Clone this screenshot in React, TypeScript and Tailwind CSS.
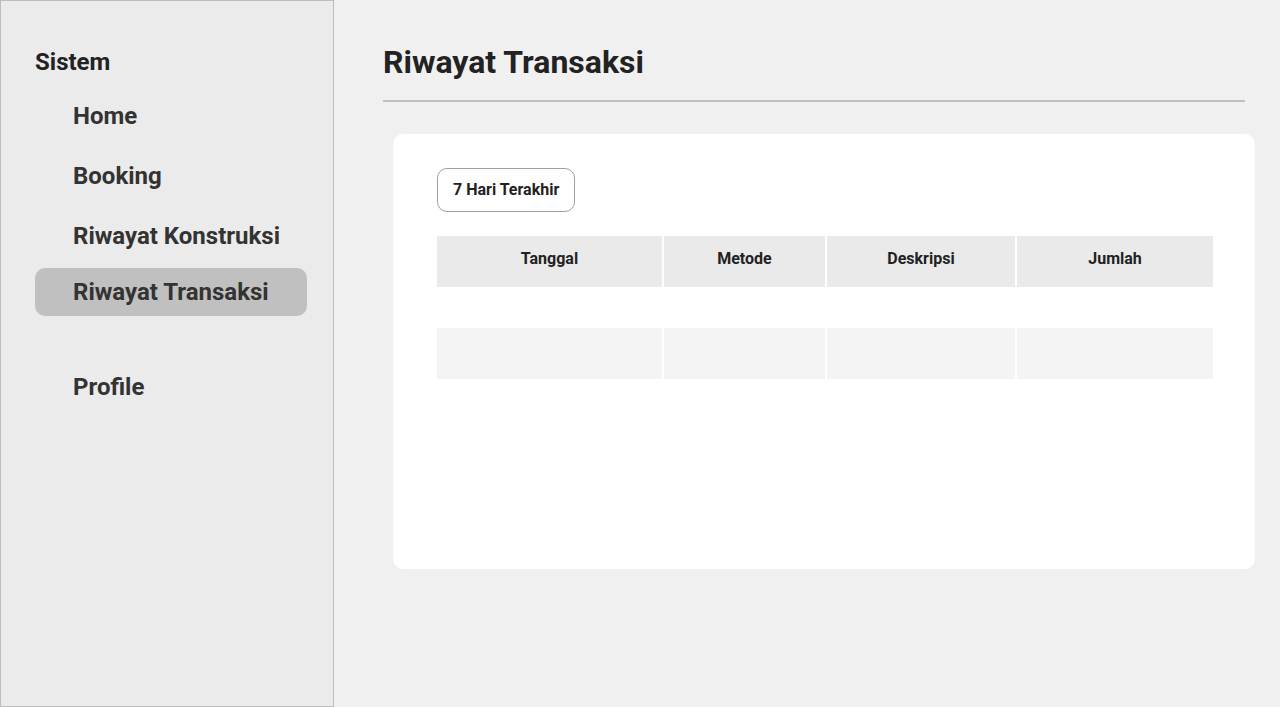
import React from 'react';

const navItems = [
  { label: 'Home', mt: 'mt-[16px]', active: false },
  { label: 'Booking', mt: 'mt-[12px]', active: false },
  { label: 'Riwayat Konstruksi', mt: 'mt-[12px]', active: false },
  { label: 'Riwayat Transaksi', mt: 'mt-[8px]', active: true },
  { label: 'Profile', mt: 'mt-[47px]', active: false },
];

const columns = ['Tanggal', 'Metode', 'Deskripsi', 'Jumlah'];

export default function App() {
  return (
    <div
      className="flex h-[707px] w-[1280px] overflow-hidden bg-[#f0f0f0]"
      style={{ fontFamily: 'Roboto, "Liberation Sans", sans-serif' }}
    >
      {/* Sidebar */}
      <aside className="w-[334px] shrink-0 border border-[#bdbdbd] bg-[#ebebeb] pl-[34px] pr-[26px] pt-[47px]">
        <div className="h-[28px] text-[24px] font-bold leading-[28px] text-[#222]">Sistem</div>
        <nav className="flex flex-col">
          {navItems.map((item) => (
            <div
              key={item.label}
              className={`${item.mt} flex h-[48px] items-center rounded-[10px] pl-[38px] text-[24px] font-bold text-[#333] ${
                item.active ? 'bg-[#c0c0c0]' : ''
              }`}
            >
              {item.label}
            </div>
          ))}
        </nav>
      </aside>

      {/* Main */}
      <main className="flex-1 pl-[49px] pr-[35px] pt-[42px]">
        <h1 className="h-[40px] text-[32px] font-bold leading-[40px] text-[#222]">Riwayat Transaksi</h1>
        <div className="mt-[18px] h-[2px] bg-[#c0c0c0]" />

        <div className="-mr-[10px] ml-[10px] mt-[32px] h-[435px] rounded-[10px] bg-white pl-[44px] pt-[34px]">
          <button className="h-[44px] rounded-[10px] border border-[#a0a0a0] bg-white px-[15px] text-[16px] font-bold text-[#222]">
            7 Hari Terakhir
          </button>

          <div className="mt-[24px] grid grid-cols-[225px_161px_188px_196px] gap-x-[2px]">
            {columns.map((c) => (
              <div key={c} className="h-[51px] bg-[#eaeaea] pt-[14px] text-center text-[16px] font-bold leading-[18px] text-[#222]">
                {c}
              </div>
            ))}
            {columns.map((c) => (
              <div key={'e' + c} className="h-[41px] bg-white" />
            ))}
            {columns.map((c) => (
              <div key={'r' + c} className="h-[51px] bg-[#f4f4f4]" />
            ))}
          </div>
        </div>
      </main>
    </div>
  );
}
